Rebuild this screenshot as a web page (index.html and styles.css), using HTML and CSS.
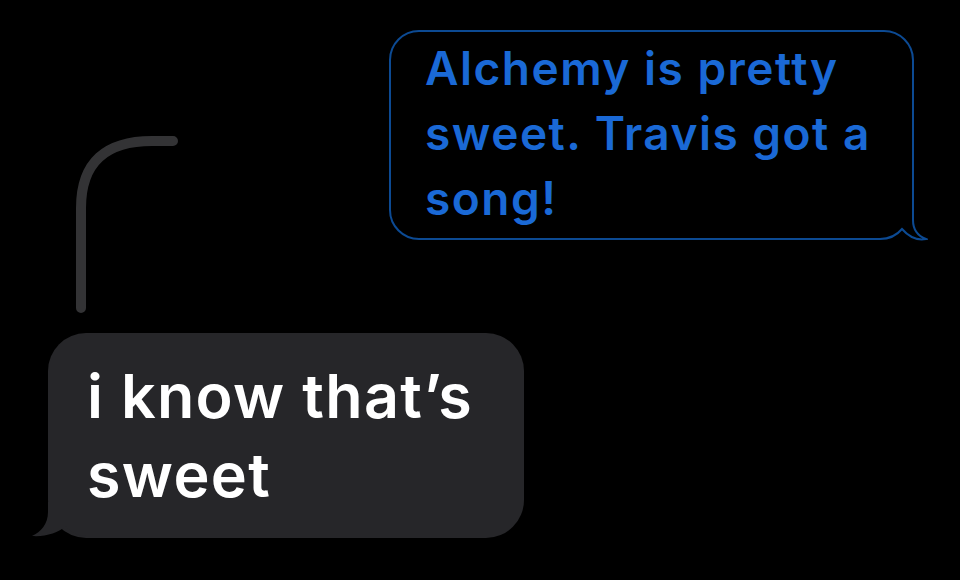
FILE: index.html
```html
<!DOCTYPE html>
<html lang="en">
<head>
<meta charset="utf-8">
<title>Messages</title>
<link rel="stylesheet" href="styles.css">
</head>
<body>
<main class="thread">
  <div class="row-out">
    <div class="bubble-out">
      <p class="text-out">Alchemy is pretty sweet. Travis got a song!</p>
      <svg class="tail-out" width="48" height="46" viewBox="0 0 48 46" aria-hidden="true">
        <rect x="0" y="10" width="37" height="36" fill="#000"/>
        <path d="M33,0 L33,24 C33,34 38,40 46,43 C38,44.5 29,41 22,33 C17,39 10,43 0,43" fill="none" stroke="#0c4a93" stroke-width="2"/>
      </svg>
    </div>
  </div>
  <div class="incoming">
    <svg class="connector" width="120" height="190" viewBox="0 0 120 190" aria-hidden="true">
      <path d="M11,178 L11,78 C11,32 36,11 82,11 L103,11" fill="none" stroke="#333335" stroke-width="10" stroke-linecap="round"/>
    </svg>
    <div class="bubble-in">
      <p class="text-in">i know that’s sweet</p>
      <svg class="tail-in" width="60" height="36" viewBox="0 0 60 36" aria-hidden="true">
        <path d="M17,0 L17,10 C17,22 10,30 1,34 C14,35 27,31 35,24 C40,30 46,34 56,34 L60,34 L60,0 Z" fill="#262629"/>
      </svg>
    </div>
  </div>
</main>
</body>
</html>
```

FILE: styles.css
```css
html, body {
  margin: 0;
  padding: 0;
  background: #000;
}

body {
  width: 960px;
  height: 580px;
  overflow: hidden;
  font-family: Inter, "Noto Sans", "Liberation Sans", sans-serif;
}

.thread {
  display: flex;
  flex-direction: column;
  padding-top: 30px;
}

.row-out {
  display: flex;
  justify-content: flex-end;
  padding-right: 46px;
}

.bubble-out {
  position: relative;
  width: 525px;
  box-sizing: border-box;
  border: 2px solid #0c4a93;
  border-radius: 30px;
  padding: 4px 10px 7px 34px;
}

.text-out {
  margin: 0;
  color: #1a69d6;
  font-size: 46px;
  line-height: 65px;
  font-weight: 600;
  letter-spacing: 1.5px;
}

.tail-out {
  position: absolute;
  right: -16px;
  bottom: -4px;
  display: block;
}

.incoming {
  display: flex;
  flex-direction: column;
  align-items: flex-start;
  padding-left: 48px;
  margin-top: -110px;
}

.connector {
  display: block;
  margin-left: 22px;
  margin-bottom: 13px;
}

.bubble-in {
  position: relative;
  width: 476px;
  box-sizing: border-box;
  background: #262629;
  border-radius: 38px;
  padding: 24px 10px 23px 39px;
}

.text-in {
  margin: 0;
  color: #fff;
  font-size: 61px;
  line-height: 79px;
  font-weight: 600;
  letter-spacing: 1.3px;
}

.tail-in {
  position: absolute;
  left: -17px;
  bottom: 0;
  display: block;
}
```
